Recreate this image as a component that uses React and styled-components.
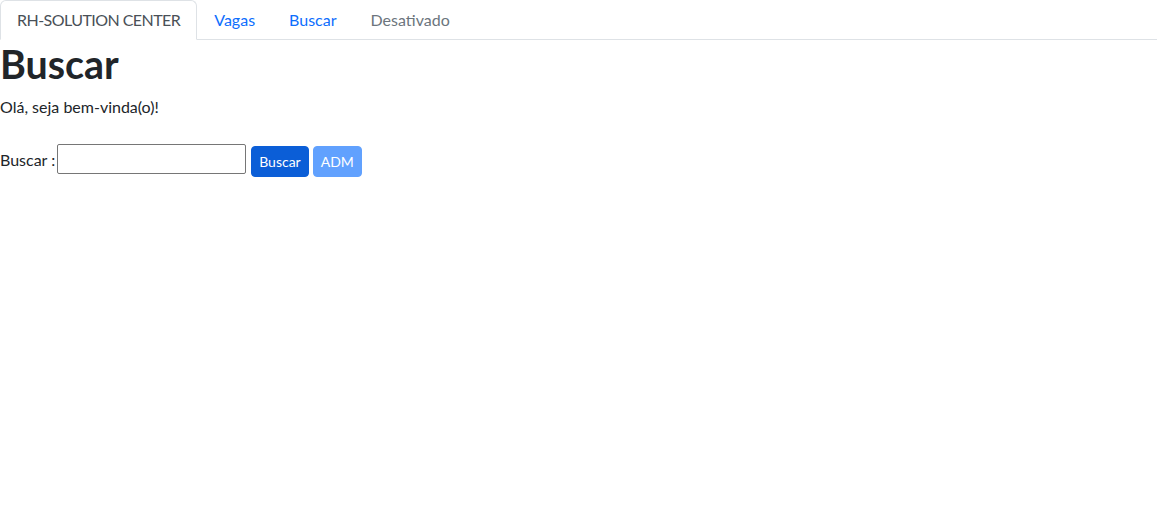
import styled, { createGlobalStyle } from "styled-components"

const GlobalStyle = createGlobalStyle`
body{
    margin: 0;
    background: #fff;
    color: #212529;
    font-family: "Segoe UI", Lato, sans-serif;
    font-size: 16px;
    line-height: 1.5;
}
`;

const Tabs = styled.ul`
display: flex;
list-style: none;
margin: 0;
padding: 0;
border-bottom: 1px solid #dee2e6;
`;

const Tab = styled.li`
margin-bottom: -1px;
a{
    display: block;
    padding: 7px 16px;
    text-decoration: none;
    border: 1px solid transparent;
    border-top-left-radius: 6px;
    border-top-right-radius: 6px;
    color: ${p => p.$disabled ? '#6c757d' : '#0d6efd'};
    ${p => p.$active && `
        color: #495057;
        background: #fff;
        border-color: #dee2e6 #dee2e6 #fff;
        letter-spacing: -0.55px;
    `}
}
`;

const Title = styled.h1`
margin: 0 0 8px;
font-size: 39.4px;
font-weight: 700;
line-height: 1.2;
`;

const Text = styled.p`
margin: 0 0 16px;
`;

const SearchForm = styled.form`
display: flex;
align-items: flex-start;
gap: 4px;
margin-top: 25px;
label{
    margin-top: 4px;
    margin-right: -2px;
}
input{
    width: 189px;
    height: 30px;
    box-sizing: border-box;
    border: 1px solid #767676;
    border-radius: 2px;
    padding: 1px 2px;
    font-size: 16px;
    margin: 0 1px 0 0;
}
`;

const Button = styled.button`
font-family: inherit;
font-size: 14px;
line-height: 21px;
padding: 4px 7px;
margin-top: 2px;
border-radius: 4px;
border: 1px solid ${p => p.$faded ? '#61a1fe' : '#0b5ed7'};
background: ${p => p.$faded ? '#61a1fe' : '#0b5ed7'};
color: #fff;
`;

const App = () => {
    return (
        <>
            <GlobalStyle />
            <Tabs>
                <Tab $active><a href="#">RH-SOLUTION CENTER</a></Tab>
                <Tab><a href="#">Vagas</a></Tab>
                <Tab><a href="#">Buscar</a></Tab>
                <Tab $disabled><a href="#">Desativado</a></Tab>
            </Tabs>
            <Title>Buscar</Title>
            <Text>Olá, seja bem-vinda(o)!</Text>
            <SearchForm onSubmit={e => e.preventDefault()}>
                <label>Buscar :</label>
                <input type="text" />
                <Button type="submit">Buscar</Button>
                <Button type="button" $faded>ADM</Button>
            </SearchForm>
        </>
    )
}
export default App
